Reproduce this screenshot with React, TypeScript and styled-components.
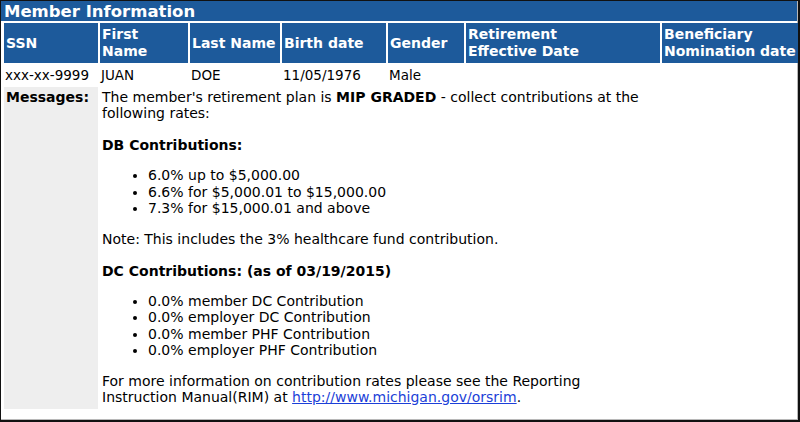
import styled, { createGlobalStyle } from 'styled-components'

const GlobalStyle = createGlobalStyle`
  html, body {
    margin: 0;
    padding: 0;
    background: #ffffff;
  }
  body {
    font-family: 'DejaVu Sans', Verdana, sans-serif;
    font-size: 14px;
    color: #000;
  }
`

const blue = '#1d5a9b'

const Frame = styled.div`
  width: 800px;
  height: 422px;
  box-sizing: border-box;
  border-left: 1px solid #111;
  border-top: 1px solid #111;
  border-right: 2px solid #111;
  border-bottom: 2px solid #111;
  overflow: hidden;
`

const Panel = styled.div`
  height: 100%;
  box-sizing: border-box;
  border-right: 1px solid #b8b8b8;
  border-bottom: 1px solid #b8b8b8;
  background: #fff;
`

const TitleBar = styled.div`
  background: ${blue};
  color: #fff;
  font-weight: bold;
  font-size: 16.5px;
  line-height: 21px;
  height: 20px;
  padding-left: 3px;
`

const InfoTable = styled.table`
  width: 796px;
  margin-left: 1px;
  border-collapse: separate;
  border-spacing: 2px;
  table-layout: fixed;
  line-height: 16px;
  font-size: 14px;
`

const HeadCell = styled.th<{ $w: number }>`
  width: ${p => p.$w}px;
  background: ${blue};
  color: #fff;
  font-weight: bold;
  font-size: 14px;
  line-height: 17px;
  text-align: left;
  vertical-align: middle;
  padding: 3px 2px;
  height: 34px;
  white-space: nowrap;
`

const DataCell = styled.td`
  padding: 2px 1px;
  vertical-align: top;
  white-space: nowrap;
  height: 16px;
  font-size: 13.5px;
`

const LabelCell = styled.td`
  background: #eeeeee;
  font-weight: bold;
  vertical-align: top;
  padding: 2px 2px;
  height: 318px;
`

const MessageCell = styled.td`
  vertical-align: top;
  padding: 2px 2px;
`

const Section = styled.b`
  font-weight: bold;
`

const RateList = styled.ul`
  margin: 14px 0;
  padding-left: 46px;
  line-height: 16.5px;
`

const Para = styled.div`
  margin: 0;
`

const Link = styled.a`
  color: #1c3fd8;
  text-decoration: underline;
`

const columns: [string[], number][] = [
  [['SSN'], 90],
  [['First', 'Name'], 84],
  [['Last Name'], 86],
  [['Birth date'], 100],
  [['Gender'], 72],
  [['Retirement', 'Effective Date'], 190],
  [['Beneficiary', 'Nomination date'], 134],
]

const row = ['xxx-xx-9999', 'JUAN', 'DOE', '11/05/1976', 'Male', '', '']

const dbRates = ['6.0% up to $5,000.00', '6.6% for $5,000.01 to $15,000.00', '7.3% for $15,000.01 and above']

const dcRates = [
  '0.0% member DC Contribution',
  '0.0% employer DC Contribution',
  '0.0% member PHF Contribution',
  '0.0% employer PHF Contribution',
]

export default function App() {
  return (
    <>
      <GlobalStyle />
      <Frame>
        <Panel>
          <TitleBar>Member Information</TitleBar>
          <InfoTable>
            <thead>
              <tr>
                {columns.map(([lines, w]) => (
                  <HeadCell key={lines.join(' ')} $w={w}>
                    {lines.map((l, i) => (
                      <span key={l}>
                        {i > 0 && <br />}
                        {l}
                      </span>
                    ))}
                  </HeadCell>
                ))}
              </tr>
            </thead>
            <tbody>
              <tr>
                {row.map((v, i) => (
                  <DataCell key={i}>{v}</DataCell>
                ))}
              </tr>
              <tr>
                <LabelCell>Messages:</LabelCell>
                <MessageCell colSpan={6}>
                  <Para>
                    The member's retirement plan is <b>MIP GRADED</b> - collect contributions at the
                    <br />
                    following rates:
                  </Para>
                  <br />
                  <Section>DB Contributions:</Section>
                  <RateList>
                    {dbRates.map(r => (
                      <li key={r}>{r}</li>
                    ))}
                  </RateList>
                  <Para>Note: This includes the 3% healthcare fund contribution.</Para>
                  <br />
                  <Section>DC Contributions: (as of 03/19/2015)</Section>
                  <RateList>
                    {dcRates.map(r => (
                      <li key={r}>{r}</li>
                    ))}
                  </RateList>
                  <Para>
                    For more information on contribution rates please see the Reporting
                    <br />
                    Instruction Manual(RIM) at <Link href="#">http://www.michigan.gov/orsrim</Link>.
                  </Para>
                </MessageCell>
              </tr>
            </tbody>
          </InfoTable>
        </Panel>
      </Frame>
    </>
  )
}
